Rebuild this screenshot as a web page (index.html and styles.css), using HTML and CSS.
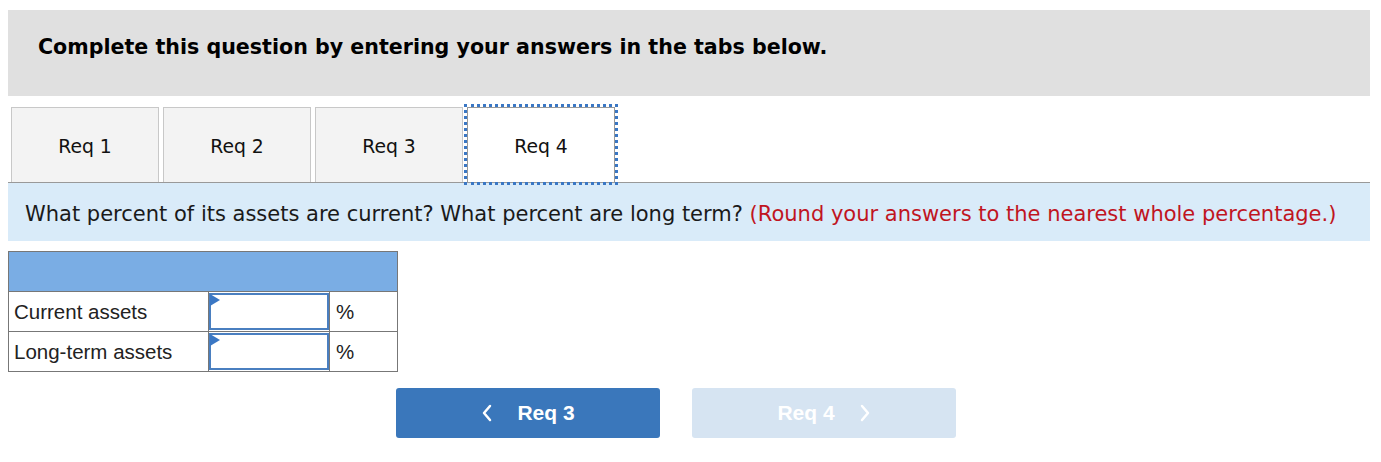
FILE: index.html
```html
<!DOCTYPE html>
<html>
<head>
<meta charset="utf-8">
<link rel="stylesheet" href="styles.css">
</head>
<body>
<div class="page">
  <div class="header">Complete this question by entering your answers in the tabs below.</div>
  <div class="tabs">
    <div class="tab">Req 1</div>
    <div class="tab">Req 2</div>
    <div class="tab">Req 3</div>
    <div class="tab active">Req 4</div>
  </div>
  <div class="instr">What percent of its assets are current? What percent are long term? <span class="red">(Round your answers to the nearest whole percentage.)</span></div>
  <table class="grid">
    <tr class="head"><td colspan="3"></td></tr>
    <tr>
      <td class="lbl">Current assets</td>
      <td class="inp"><div class="box"><span class="tri"></span></div></td>
      <td class="pct">%</td>
    </tr>
    <tr>
      <td class="lbl">Long-term assets</td>
      <td class="inp"><div class="box"><span class="tri"></span></div></td>
      <td class="pct">%</td>
    </tr>
  </table>
  <div class="nav">
    <div class="btn prev">
      <svg class="chev" width="12" height="18" viewBox="0 0 12 18"><polyline points="9,2 3,9 9,16" fill="none" stroke="#fff" stroke-width="2.5" stroke-linecap="round" stroke-linejoin="round"/></svg>
      <span>Req 3</span>
    </div>
    <div class="btn next">
      <span>Req 4</span>
      <svg class="chev" width="12" height="18" viewBox="0 0 12 18"><polyline points="3,2 9,9 3,16" fill="none" stroke="#fff" stroke-width="2.5" stroke-linecap="round" stroke-linejoin="round"/></svg>
    </div>
  </div>
</div>
</body>
</html>
```

FILE: styles.css
```css
html, body {
  margin: 0;
  padding: 0;
  background: #fff;
}
.page {
  margin: 10px 0 0 8px;
  width: 1362px;
  font-family: "DejaVu Sans", Verdana, sans-serif;
  color: #000;
}
.header {
  background: #e0e0e0;
  height: 86px;
  box-sizing: border-box;
  padding: 25px 0 0 30px;
  font-weight: bold;
  font-size: 20.6px;
  line-height: 24px;
}
.tabs {
  display: flex;
  gap: 4px;
  margin-top: 11px;
  padding-left: 3px;
  border-bottom: 1px solid #999;
  height: 75px;
}
.tab {
  width: 148px;
  height: 75px;
  box-sizing: border-box;
  background: #f3f3f3;
  border: 1px solid #c8c8c8;
  border-bottom: none;
  display: flex;
  align-items: center;
  justify-content: center;
  padding-top: 2px;
  font-size: 18.8px;
  color: #111;
}
.tab.active {
  background: #fff;
  border-color: #999;
  height: 75px;
  outline: 3px dotted #3a77c4;
  outline-offset: 0;
  position: relative;
  z-index: 1;
}
.instr {
  background: #d9ebf9;
  height: 58px;
  box-sizing: border-box;
  padding: 19px 0 0 17px;
  font-size: 21px;
  line-height: 24px;
  color: #1a1a1a;
}
.red {
  color: #c0151f;
}
.grid {
  margin-top: 10px;
  border-collapse: collapse;
  font-family: "Liberation Sans", Arial, sans-serif;
  font-size: 20.5px;
}
.grid td {
  border: 1px solid #777;
  padding: 0;
  height: 39px;
}
.grid .head td {
  background: #7aade4;
}
.lbl {
  width: 194px;
  padding-left: 5px !important;
  color: #222;
}
.inp {
  width: 120px;
}
.pct {
  width: 61px;
  padding-left: 6px !important;
  color: #222;
}
.box {
  position: relative;
  height: 37px;
  box-sizing: border-box;
  border: 2px solid #4a7fc0;
  background: #fff;
}
.tri {
  position: absolute;
  left: -1px;
  top: -1px;
  width: 0;
  height: 0;
  border-top: 6px solid transparent;
  border-bottom: 6px solid transparent;
  border-left: 10px solid #3a77c4;
}
.nav {
  display: flex;
  gap: 32px;
  margin-top: 16px;
  padding-left: 388px;
}
.btn {
  width: 264px;
  height: 50px;
  border-radius: 3px;
  display: flex;
  align-items: center;
  justify-content: center;
  gap: 24px;
  font-family: "Liberation Sans", Arial, sans-serif;
  font-weight: bold;
  font-size: 21px;
  color: #fff;
}
.btn.prev {
  background: #3a77bb;
}
.btn.next {
  background: #d6e4f2;
}
.chev {
  display: block;
}
```
